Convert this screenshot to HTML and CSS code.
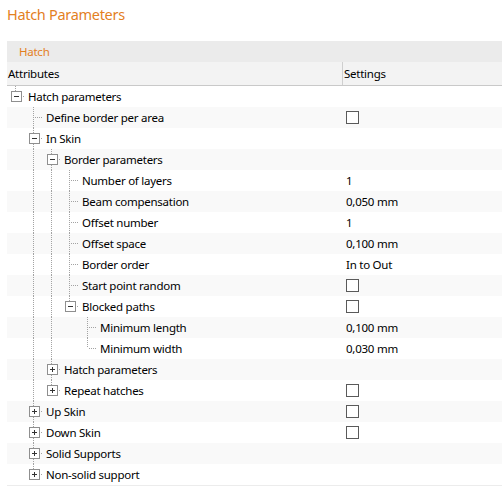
FILE: index.html
```html
<!DOCTYPE html>
<html>
<head>
<meta charset="utf-8">
<link rel="stylesheet" href="styles.css">
</head>
<body>
<h1 class="title">Hatch Parameters</h1>
<div class="group">
  <div class="group-head">Hatch</div>
  <div class="head">
    <div class="hc attr-h">Attributes</div>
    <div class="hc set-h">Settings</div>
  </div>
  <div class="rows">
    <div class="row">
      <div class="attr"><span class="g l"><svg class="exp" viewBox="0 0 11 11"><rect x="0.5" y="0.5" width="10" height="10" fill="#fff" stroke="#8f8f8f"/><path d="M3 5.5h5" stroke="#333"/></svg></span><span class="label">Hatch parameters</span></div>
      <div class="set"></div>
    </div>
    <div class="row">
      <div class="attr"><span class="g"></span><span class="g t"></span><span class="label">Define border per area</span></div>
      <div class="set"><span class="cb"></span></div>
    </div>
    <div class="row">
      <div class="attr"><span class="g"></span><span class="g t"><svg class="exp" viewBox="0 0 11 11"><rect x="0.5" y="0.5" width="10" height="10" fill="#fff" stroke="#8f8f8f"/><path d="M3 5.5h5" stroke="#333"/></svg></span><span class="label">In Skin</span></div>
      <div class="set"></div>
    </div>
    <div class="row">
      <div class="attr"><span class="g"></span><span class="g v"></span><span class="g t"><svg class="exp" viewBox="0 0 11 11"><rect x="0.5" y="0.5" width="10" height="10" fill="#fff" stroke="#8f8f8f"/><path d="M3 5.5h5" stroke="#333"/></svg></span><span class="label">Border parameters</span></div>
      <div class="set"></div>
    </div>
    <div class="row">
      <div class="attr"><span class="g"></span><span class="g v"></span><span class="g v"></span><span class="g t"></span><span class="label">Number of layers</span></div>
      <div class="set">1</div>
    </div>
    <div class="row">
      <div class="attr"><span class="g"></span><span class="g v"></span><span class="g v"></span><span class="g t"></span><span class="label">Beam compensation</span></div>
      <div class="set">0,050 mm</div>
    </div>
    <div class="row">
      <div class="attr"><span class="g"></span><span class="g v"></span><span class="g v"></span><span class="g t"></span><span class="label">Offset number</span></div>
      <div class="set">1</div>
    </div>
    <div class="row">
      <div class="attr"><span class="g"></span><span class="g v"></span><span class="g v"></span><span class="g t"></span><span class="label">Offset space</span></div>
      <div class="set">0,100 mm</div>
    </div>
    <div class="row">
      <div class="attr"><span class="g"></span><span class="g v"></span><span class="g v"></span><span class="g t"></span><span class="label">Border order</span></div>
      <div class="set">In to Out</div>
    </div>
    <div class="row">
      <div class="attr"><span class="g"></span><span class="g v"></span><span class="g v"></span><span class="g t"></span><span class="label">Start point random</span></div>
      <div class="set"><span class="cb"></span></div>
    </div>
    <div class="row">
      <div class="attr"><span class="g"></span><span class="g v"></span><span class="g v"></span><span class="g l"><svg class="exp" viewBox="0 0 11 11"><rect x="0.5" y="0.5" width="10" height="10" fill="#fff" stroke="#8f8f8f"/><path d="M3 5.5h5" stroke="#333"/></svg></span><span class="label">Blocked paths</span></div>
      <div class="set"><span class="cb"></span></div>
    </div>
    <div class="row">
      <div class="attr"><span class="g"></span><span class="g v"></span><span class="g v"></span><span class="g"></span><span class="g t"></span><span class="label">Minimum length</span></div>
      <div class="set">0,100 mm</div>
    </div>
    <div class="row">
      <div class="attr"><span class="g"></span><span class="g v"></span><span class="g v"></span><span class="g"></span><span class="g l"></span><span class="label">Minimum width</span></div>
      <div class="set">0,030 mm</div>
    </div>
    <div class="row">
      <div class="attr"><span class="g"></span><span class="g v"></span><span class="g t"><svg class="exp" viewBox="0 0 11 11"><rect x="0.5" y="0.5" width="10" height="10" fill="#fff" stroke="#8f8f8f"/><path d="M3 5.5h5M5.5 3v5" stroke="#333"/></svg></span><span class="label">Hatch parameters</span></div>
      <div class="set"></div>
    </div>
    <div class="row">
      <div class="attr"><span class="g"></span><span class="g v"></span><span class="g l"><svg class="exp" viewBox="0 0 11 11"><rect x="0.5" y="0.5" width="10" height="10" fill="#fff" stroke="#8f8f8f"/><path d="M3 5.5h5M5.5 3v5" stroke="#333"/></svg></span><span class="label">Repeat hatches</span></div>
      <div class="set"><span class="cb"></span></div>
    </div>
    <div class="row">
      <div class="attr"><span class="g"></span><span class="g t"><svg class="exp" viewBox="0 0 11 11"><rect x="0.5" y="0.5" width="10" height="10" fill="#fff" stroke="#8f8f8f"/><path d="M3 5.5h5M5.5 3v5" stroke="#333"/></svg></span><span class="label">Up Skin</span></div>
      <div class="set"><span class="cb"></span></div>
    </div>
    <div class="row">
      <div class="attr"><span class="g"></span><span class="g t"><svg class="exp" viewBox="0 0 11 11"><rect x="0.5" y="0.5" width="10" height="10" fill="#fff" stroke="#8f8f8f"/><path d="M3 5.5h5M5.5 3v5" stroke="#333"/></svg></span><span class="label">Down Skin</span></div>
      <div class="set"><span class="cb"></span></div>
    </div>
    <div class="row">
      <div class="attr"><span class="g"></span><span class="g t"><svg class="exp" viewBox="0 0 11 11"><rect x="0.5" y="0.5" width="10" height="10" fill="#fff" stroke="#8f8f8f"/><path d="M3 5.5h5M5.5 3v5" stroke="#333"/></svg></span><span class="label">Solid Supports</span></div>
      <div class="set"></div>
    </div>
    <div class="row">
      <div class="attr"><span class="g"></span><span class="g l"><svg class="exp" viewBox="0 0 11 11"><rect x="0.5" y="0.5" width="10" height="10" fill="#fff" stroke="#8f8f8f"/><path d="M3 5.5h5M5.5 3v5" stroke="#333"/></svg></span><span class="label">Non-solid support</span></div>
      <div class="set"></div>
    </div>
  </div>
</div>
</body>
</html>
```
FILE: styles.css
```css
:root {
  --vd: repeating-linear-gradient(to bottom, #a3a3a3 0 1px, transparent 1px 2px);
  --hd: repeating-linear-gradient(to right, #a3a3a3 0 1px, transparent 1px 2px);
}
html, body {
  margin: 0;
  padding: 0;
  background: #fff;
}
body {
  width: 502px;
  font-family: "Noto Sans", "Open Sans", sans-serif;
  font-size: 11.5px;
  letter-spacing: -0.25px;
  color: #000;
  overflow: hidden;
}
.title {
  margin: 0;
  height: 41px;
  box-sizing: border-box;
  padding: 4px 0 0 7px;
  font-size: 14.5px;
  letter-spacing: -0.3px;
  line-height: 20px;
  font-weight: normal;
  color: #e3801f;
}
.group {
  margin-left: 7px;
}
.group-head {
  height: 21px;
  line-height: 21px;
  padding-left: 12px;
  background: #ebebeb;
  color: #e3801f;
}
.head {
  display: flex;
  height: 23px;
  line-height: 23px;
  background: #f3f3f3;
  border-bottom: 1px solid #c9c9c9;
}
.attr-h {
  flex: 0 0 335px;
  box-sizing: border-box;
  padding-left: 1px;
}
.set-h {
  flex: 1;
  border-left: 1px solid #cfcfcf;
  padding-left: 1px;
}
.rows {
  border-bottom: 1px solid #ececec;
}
.row {
  display: flex;
  height: 21px;
  line-height: 21px;
}
.row:nth-child(even) {
  background: #f9f9f9;
}
.attr {
  flex: 0 0 335px;
  display: flex;
  align-items: center;
  white-space: nowrap;
}
.set {
  flex: 1;
  display: flex;
  align-items: center;
  padding-left: 4px;
  white-space: nowrap;
}
.g {
  flex: 0 0 18px;
  height: 21px;
  display: flex;
  align-items: center;
  background-repeat: no-repeat;
}
.g.v {
  background-image: var(--vd);
  background-position: 8px 0;
  background-size: 1px 21px;
}
.g.t {
  background-image: var(--vd), var(--hd);
  background-position: 8px 0, 10px 10px;
  background-size: 1px 21px, 8px 1px;
}
.g.l {
  background-image: var(--vd), var(--hd);
  background-position: 8px 0, 10px 10px;
  background-size: 1px 10px, 8px 1px;
}
.exp {
  width: 11px;
  height: 11px;
  margin-left: 4px;
  display: block;
}
.label {
  padding-left: 3px;
}
.cb {
  display: block;
  width: 13px;
  height: 13px;
  box-sizing: border-box;
  border: 1px solid #5a5a5a;
  background: #fff;
}
```
